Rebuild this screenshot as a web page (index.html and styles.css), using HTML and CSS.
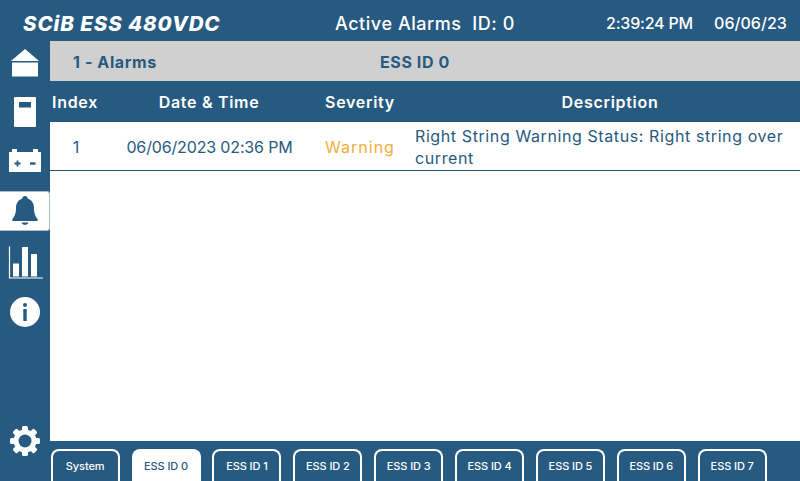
FILE: index.html
```html
<!DOCTYPE html>
<html lang="en">
<head>
<meta charset="utf-8">
<title>SCiB ESS 480VDC</title>
<link rel="stylesheet" href="styles.css">
</head>
<body>
<div class="app">
  <header class="topbar">
    <div class="brand">SCiB ESS 480VDC</div>
    <div class="page-title">Active Alarms&nbsp; ID: 0</div>
    <div class="clock">2:39:24 PM</div>
    <div class="date">06/06/23</div>
  </header>
  <nav class="sidebar">
    <div class="nav-item">
      <svg class="icon" viewBox="0 0 50 40"><path d="M25 8 39 20H11Z" fill="#fff"/><rect x="12" y="21.500" width="26" height="14" fill="#fff"/></svg>
    </div>
    <div class="nav-item">
      <svg class="icon" viewBox="0 0 50 40"><rect x="14" y="6" width="22" height="30" rx="1" fill="#fff"/><rect x="19" y="11" width="12" height="5.500" fill="#275a80"/></svg>
    </div>
    <div class="nav-item">
      <svg class="icon" viewBox="0 0 50 40"><path d="M12 8h5v3h16V8h5v3h3v20H9V11h3Z" fill="#fff"/><path d="M14.500 22.500h6M17.500 19.500v6" stroke="#275a80" stroke-width="1.800" fill="none"/><path d="M30 22.500h5.500" stroke="#275a80" stroke-width="2.400" fill="none"/></svg>
    </div>
    <div class="nav-item active">
      <svg class="icon" viewBox="0 0 50 40"><path d="M25 5c1.600 0 2.700 1 2.700 2.500C32 9 34 12.500 34 17c0 5.500 1.500 8.500 3.500 11 .7 1 .3 2-.8 2H13.300c-1.100 0-1.500-1-.8-2 2-2.500 3.500-5.500 3.500-11 0-4.500 2-8 6.300-9.500C22.300 6 23.400 5 25 5ZM21.500 31.500h7c-.5 1.500-2 2.300-3.500 2.300s-3-.8-3.500-2.300Z" fill="#275a80"/></svg>
    </div>
    <div class="nav-item">
      <svg class="icon" viewBox="0 0 50 40"><path d="M9.500 5.500V37H43" stroke="#fff" stroke-width="1.200" fill="none"/><rect x="13" y="22.500" width="6" height="13" fill="#fff"/><rect x="22" y="6" width="6" height="29.500" fill="#fff"/><rect x="31" y="13" width="6" height="22.500" fill="#fff"/></svg>
    </div>
    <div class="nav-item">
      <svg class="icon" viewBox="0 0 50 40"><circle cx="25" cy="21" r="15" fill="#fff"/><circle cx="25" cy="14" r="2" fill="#275a80"/><rect x="23.300" y="18" width="3.400" height="12" fill="#275a80"/></svg>
    </div>
    <div class="nav-item settings">
      <svg class="icon" viewBox="0 0 50 40">
        <g fill="#fff">
          <rect x="22" y="5" width="6" height="30" rx="1.500"/>
          <rect x="22" y="5" width="6" height="30" rx="1.500" transform="rotate(45 25 20)"/>
          <rect x="22" y="5" width="6" height="30" rx="1.500" transform="rotate(90 25 20)"/>
          <rect x="22" y="5" width="6" height="30" rx="1.500" transform="rotate(135 25 20)"/>
          <circle cx="25" cy="20" r="11.500"/>
        </g>
        <circle cx="25" cy="20" r="6.500" fill="#275a80"/>
      </svg>
    </div>
  </nav>
  <main class="content">
    <div class="section-bar">
      <span class="section-name">1 - Alarms</span>
      <span class="section-id">ESS ID 0</span>
    </div>
    <div class="table-row table-head">
      <div>Index</div>
      <div>Date &amp; Time</div>
      <div>Severity</div>
      <div class="head-desc">Description</div>
    </div>
    <div class="table-row table-data">
      <div class="cell-index">1</div>
      <div class="cell-date">06/06/2023 02:36 PM</div>
      <div class="warning">Warning</div>
      <div class="cell-desc">Right String Warning Status: Right string over current</div>
    </div>
  </main>
  <footer class="tabs">
    <div class="tab">System</div>
    <div class="tab selected">ESS ID 0</div>
    <div class="tab">ESS ID 1</div>
    <div class="tab">ESS ID 2</div>
    <div class="tab">ESS ID 3</div>
    <div class="tab">ESS ID 4</div>
    <div class="tab">ESS ID 5</div>
    <div class="tab">ESS ID 6</div>
    <div class="tab">ESS ID 7</div>
  </footer>
</div>
</body>
</html>
```
FILE: styles.css
```css
* { box-sizing: border-box; }
html, body { margin: 0; padding: 0; }
body {
  width: 800px;
  height: 481px;
  overflow: hidden;
  background: #275a80;
  font-family: Inter, "Open Sans", sans-serif;
  color: #275a80;
}
.app {
  display: grid;
  grid-template-columns: 50px 750px;
  grid-template-rows: 41px 400px 40px;
  width: 800px;
  height: 481px;
}
.topbar {
  grid-column: 1 / 3;
  display: grid;
  grid-template-columns: 312px 271px 108px 1fr;
  align-items: center;
  padding-left: 23px;
  padding-top: 4px;
  background: #275a80;
  color: #fff;
  font-size: 17px;
  font-weight: 500;
}
.brand { padding-top: 2px; font-size: 20.500px; font-weight: 800; font-style: italic; letter-spacing: .9px; white-space: nowrap; }
.page-title { padding-top: 2px; font-size: 18px; letter-spacing: .55px; white-space: nowrap; }
.clock { font-size: 16px; letter-spacing: -.2px; white-space: nowrap; }
.date { font-size: 16px; letter-spacing: .05px; white-space: nowrap; }
.sidebar {
  grid-row: 2 / 4;
  display: flex;
  flex-direction: column;
  gap: 10px;
  padding-bottom: 20px;
  background: #275a80;
}
.nav-item { height: 40px; flex: none; }
.nav-item.active {
  background: #fff;
  border-radius: 0 4px 4px 0;
  box-shadow: inset 0 1px 0 #a9bdcc, inset -1px 0 0 #a9bdcc, inset 0 -1px 0 #a9bdcc;
}
.settings { margin-top: auto; }
.icon { display: block; width: 50px; height: 40px; }
.content { background: #fff; display: flex; flex-direction: column; }
.section-bar {
  display: grid;
  grid-template-columns: 307px 1fr;
  align-items: center;
  height: 40px;
  padding: 2px 0 0 23px;
  background: #d0d0d0;
  font-size: 16px;
  font-weight: 700;
  letter-spacing: .6px;
}
.table-row {
  display: grid;
  grid-template-columns: 50px 218px 84px 398px;
  text-align: center;
  align-items: center;
}
.table-head {
  height: 41px;
  background: #275a80;
  color: #fff;
  font-size: 16px;
  font-weight: 600;
  letter-spacing: .7px;
}
.head-desc { padding-left: 18px; }
.table-data {
  height: 49px;
  padding-top: 2px;
  border-bottom: 1px solid #275a80;
  font-size: 16px;
  line-height: 22px;
  letter-spacing: -.15px;
  font-weight: 400;
}
.cell-index { padding-left: 2px; }
.cell-date { padding-left: 1px; }
.warning { color: #f0ae3c; letter-spacing: 1px; }
.cell-desc { text-align: left; padding: 0 10px 0 13px; letter-spacing: .6px; }
.tabs {
  display: flex;
  gap: 11.875px;
  padding: 8px 0 0 .7px;
  background: #275a80;
}
.tab {
  width: 69px;
  height: 32px;
  flex: none;
  padding-top: 3px;
  border: 2px solid #fff;
  border-bottom: 0;
  border-radius: 8px 8px 0 0;
  color: #fff;
  font-size: 11px;
  line-height: 24px;
  font-weight: 500;
  letter-spacing: -.1px;
  text-align: center;
}
.tab.selected { background: #fff; color: #275a80; }
```
